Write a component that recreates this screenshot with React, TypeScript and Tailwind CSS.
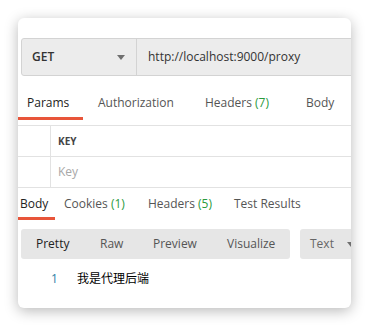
import React from "react";

const font = { fontFamily: '"Open Sans", "Noto Sans CJK SC", sans-serif' };

function Caret({ className }: { className?: string }) {
  return (
    <svg width="8" height="5" viewBox="0 0 8 5" className={className}>
      <path d="M0 0 L8 0 L4 5 Z" fill="#6f6f6f" />
    </svg>
  );
}

export default function App() {
  return (
    <div
      className="w-[369px] h-[326px] bg-white pt-[18px] pl-[18px] text-[12px] text-[#333]"
      style={font}
    >
      <div className="w-[333px] h-[290px] bg-white rounded-[6px] overflow-hidden shadow-[0_3px_14px_rgba(0,0,0,0.28)] pt-[20px]">
        {/* request bar */}
        <div className="flex h-[38px] ml-[3px] w-[400px] bg-[#ececec] border border-[#d3d3d3] rounded-l-[3px]">
          <div className="w-[115px] shrink-0 flex items-center justify-between pl-[10px] pr-[11px] border-r border-[#d3d3d3]">
            <span className="font-semibold text-[#333]">GET</span>
            <Caret />
          </div>
          <div className="flex items-center pl-[11px] text-[#333]">http://localhost:9000/proxy</div>
        </div>

        {/* request tabs */}
        <div className="flex h-[44px] items-end">
          <div className="w-[65px] pl-[9px] pb-[5px] border-b-[3px] border-[#e8553a] text-[#222] leading-[18px]">Params</div>
          <div className="w-[107px] pl-[15px] pb-[8px] text-[#555] leading-[18px]">Authorization</div>
          <div className="w-[101px] pl-[15px] pb-[8px] text-[#555] leading-[18px]">
            Headers <span className="text-[#2a9a3d]">(7)</span>
          </div>
          <div className="pl-[15px] pb-[8px] text-[#555] leading-[18px]">Body</div>
        </div>

        {/* params table */}
        <div className="mt-[5px] border-t border-[#e2e2e2]">
          <div className="flex h-[31px] border-b border-[#e2e2e2]">
            <div className="w-[33px] border-r border-[#e2e2e2]" />
            <div className="flex items-center pl-[7px] text-[10px] font-bold text-[#444]">KEY</div>
          </div>
          <div className="flex h-[31px] border-b border-[#e2e2e2]">
            <div className="w-[33px] border-r border-[#e2e2e2]" />
            <div className="flex items-center pl-[7px] text-[#a8a8a8]">Key</div>
          </div>
        </div>

        {/* response tabs */}
        <div className="flex pt-[7px] leading-[18px]">
          <div className="w-[37px] pl-[2px] pb-[4px] border-b-[3px] border-[#e8553a] text-[#222]">Body</div>
          <div className="w-[84px] pl-[9px] text-[#555]">
            Cookies <span className="text-[#2a9a3d]">(1)</span>
          </div>
          <div className="w-[86px] pl-[9px] text-[#555]">
            Headers <span className="text-[#2a9a3d]">(5)</span>
          </div>
          <div className="pl-[9px] text-[#555]">Test Results</div>
        </div>

        {/* format toolbar */}
        <div className="flex mt-[9px] ml-[3px] gap-[10px]">
          <div className="flex shrink-0 items-center w-[269px] h-[30px] bg-[#e6e6e6] rounded-[3px] text-[#555]">
            <span className="w-[79px] shrink-0 pl-[15px] text-[#222]">Pretty</span>
            <span className="w-[53px] shrink-0">Raw</span>
            <span className="w-[74px] shrink-0">Preview</span>
            <span>Visualize</span>
          </div>
          <div className="flex shrink-0 items-center gap-[13px] w-[80px] h-[30px] bg-[#e6e6e6] rounded-[3px] pl-[10px] text-[#666]">
            <span>Text</span>
            <Caret />
          </div>
        </div>

        {/* response body */}
        <div className="flex items-center mt-[11px] h-[18px]">
          <span className="pl-[33px] text-[#2f7fa6]">1</span>
          <span className="pl-[19px] text-black">我是代理后端</span>
        </div>
      </div>
    </div>
  );
}
